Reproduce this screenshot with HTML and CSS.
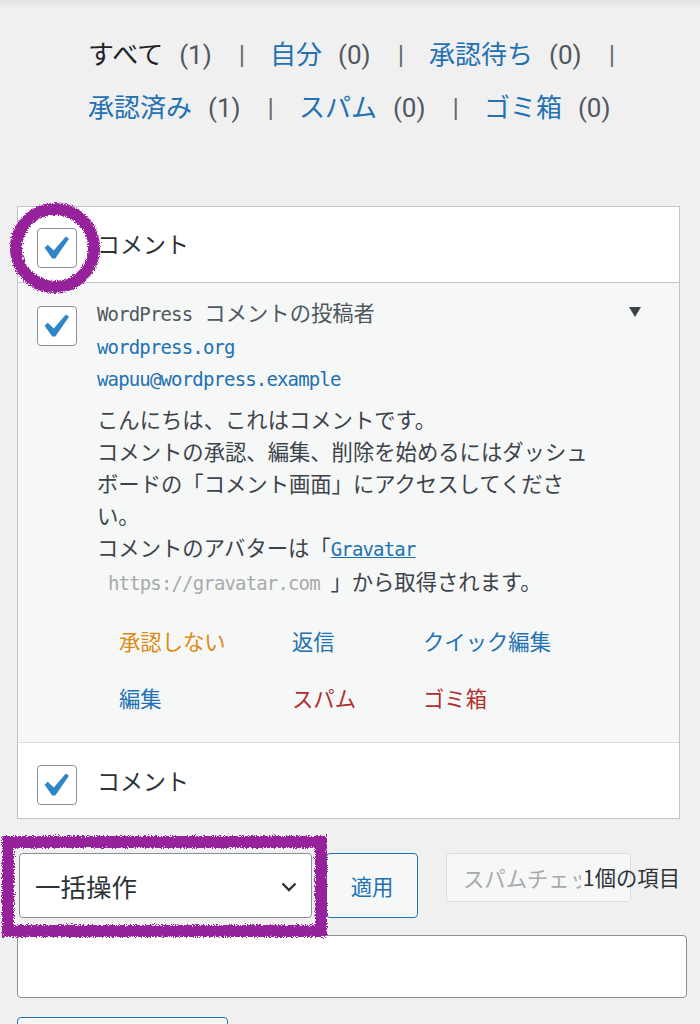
FILE: index.html
```html
<!DOCTYPE html>
<html lang="ja">
<head>
<meta charset="utf-8">
<title>コメント</title>
<link rel="stylesheet" href="styles.css">
</head>
<body>
<div class="shade"></div>
<ul class="subsubsub">
  <li><span class="current">すべて</span><span class="count">(1)</span><span class="sep">|</span></li>
  <li><a class="link">自分</a><span class="count">(0)</span><span class="sep">|</span></li>
  <li><a class="link">承認待ち</a><span class="count">(0)</span><span class="sep">|</span></li>
  <li><a class="link">承認済み</a><span class="count">(1)</span><span class="sep">|</span></li>
  <li><a class="link">スパム</a><span class="count">(0)</span><span class="sep">|</span></li>
  <li><a class="link">ゴミ箱</a><span class="count">(0)</span></li>
</ul>

<div class="table">
  <div class="row head">
    <span class="cb"><svg class="check" viewBox="0 0 20 20"><path d="M14.83 4.89l1.34.94-5.81 8.38H9.02L5.78 9.67l1.34-1.25 2.57 2.4z"/></svg></span>
    <span class="col-title">コメント</span>
  </div>
  <div class="row comment">
    <span class="cb cb-row"><svg class="check" viewBox="0 0 20 20"><path d="M14.83 4.89l1.34.94-5.81 8.38H9.02L5.78 9.67l1.34-1.25 2.57 2.4z"/></svg></span>
    <div class="body">
      <div class="author">
        <div class="mono-line"><span class="mono gray">WordPress</span><span class="jp gray">コメントの投稿者</span></div>
        <div class="mono-line"><a class="mono link">wordpress.org</a></div>
        <div class="mono-line"><a class="mono link">wapuu@wordpress.example</a></div>
      </div>
      <p class="text">こんにちは、これはコメントです。<br>コメントの承認、編集、削除を始めるにはダッシュボードの「コメント画面」にアクセスしてください。<br>コメントのアバターは「<a class="mono link under">Gravatar</a><br><span class="mono url">https://gravatar.com </span>」から取得されます。</p>
      <div class="actions">
        <a class="unapprove">承認しない</a>
        <a class="link">返信</a>
        <a class="link">クイック編集</a>
        <a class="link">編集</a>
        <a class="danger">スパム</a>
        <a class="danger">ゴミ箱</a>
      </div>
    </div>
    <span class="toggle"></span>
  </div>
  <div class="row foot">
    <span class="cb cb-foot"><svg class="check" viewBox="0 0 20 20"><path d="M14.83 4.89l1.34.94-5.81 8.38H9.02L5.78 9.67l1.34-1.25 2.57 2.4z"/></svg></span>
    <span class="col-title foot-title">コメント</span>
  </div>
</div>

<div class="tablenav">
  <div class="select">一括操作<svg class="chev" viewBox="0 0 16 10"><polyline points="1.5,1.5 8,8 14.5,1.5"/></svg></div>
  <span class="btn apply">適用</span>
  <span class="btn disabled"><span class="clip">スパムチェック</span></span>
  <span class="num">1個の項目</span>
</div>
<div class="input"></div>
<div class="bottom-btn"></div>

<svg class="marks" viewBox="0 0 700 1024" width="700" height="1024">
  <defs>
    <filter id="rough" x="-10%" y="-10%" width="120%" height="120%">
      <feTurbulence type="fractalNoise" baseFrequency="0.9" numOctaves="2" seed="4" result="n"/>
      <feDisplacementMap in="SourceGraphic" in2="n" scale="6" xChannelSelector="R" yChannelSelector="G"/>
    </filter>
  </defs>
  <circle cx="55" cy="248" r="39" fill="none" stroke="#95239a" stroke-width="12" filter="url(#rough)"/>
  <rect x="8" y="842" width="313" height="89" fill="none" stroke="#95239a" stroke-width="12" filter="url(#rough)"/>
</svg>
</body>
</html>
```

FILE: styles.css
```css
html, body {
  margin: 0;
  padding: 0;
}
body {
  background: #f0f0f1;
  width: 700px;
  height: 1024px;
  overflow: hidden;
  position: relative;
  font-family: "Noto Sans CJK JP", "Noto Sans", sans-serif;
  color: #3c434a;
}
a { text-decoration: none; }

.shade {
  height: 10px;
  background: linear-gradient(#e4e4e5, #f0f0f1);
}

.subsubsub {
  list-style: none;
  margin: 16px 0 0 0;
  padding: 0 0 0 88px;
  display: flex;
  flex-wrap: wrap;
  font-size: 26px;
  line-height: 53px;
}
.subsubsub li {
  display: flex;
  align-items: baseline;
  height: 53px;
}
.current { color: #1d2327; }
.link { color: #2271b1; }
.count {
  font-family: Roboto, "Noto Sans", sans-serif;
  color: #50575e;
  margin-left: 16px;
}
.sep {
  font-family: Roboto, "Noto Sans", sans-serif;
  color: #646970;
  margin: 0 25px 0 27px;
}

.table {
  margin: 74px 20px 0 17px;
  border: 1px solid #c3c4c7;
  background: #fff;
}
.row {
  display: flex;
  align-items: flex-start;
  padding: 0 19px;
  position: relative;
}
.head {
  height: 75px;
  border-bottom: 1px solid #c3c4c7;
}
.foot {
  height: 75px;
  border-top: 1px solid #dcdcde;
}
.comment {
  background: #f6f7f7;
}

.cb {
  box-sizing: border-box;
  width: 40px;
  height: 40px;
  border: 1.5px solid #8c8f94;
  border-radius: 4px;
  background: #fff;
  position: relative;
  flex: none;
  margin-top: 21px;
}
.cb-row { margin-top: 23px; }
.cb-foot { margin-top: 22px; }
.check {
  position: absolute;
  left: -7px;
  top: -4px;
  width: 47px;
  height: 47px;
  fill: #2f86c6;
}
.col-title {
  font-size: 23px;
  line-height: 32px;
  margin: 20px 0 0 20px;
  color: #2c3338;
}
.foot-title { margin-top: 21px; }

.body {
  margin-left: 20px;
  padding: 13px 0 28px;
  font-size: 21.33px;
}
.mono-line {
  line-height: 32.5px;
  height: 32.5px;
}
.mono {
  font-family: "DejaVu Sans Mono", "Liberation Mono", monospace;
  font-size: 19px;
  letter-spacing: -0.85px;
}
.gray { color: #50575e; }
.jp {
  font-family: "Noto Sans CJK JP", sans-serif;
  font-size: 21.33px;
  margin-left: 12px;
}
.text {
  margin: 9px 0 0 0;
  width: 500px;
  line-height: 32px;
  color: #3c434a;
}
.under { text-decoration: underline; }
.url {
  color: #a7aaad;
  margin-left: 11px;
}
.actions {
  margin: 26.5px 0 0 22px;
  display: grid;
  grid-template-columns: 173px 131px auto;
  row-gap: 25px;
  line-height: 32px;
}
.unapprove { color: #dd8a12; }
.danger { color: #b32d2e; }
.toggle {
  position: absolute;
  left: 611px;
  top: 24px;
  width: 0;
  height: 0;
  border-left: 6.5px solid transparent;
  border-right: 6.5px solid transparent;
  border-top: 10px solid #3c434a;
}

.tablenav {
  position: relative;
  display: flex;
  align-items: flex-start;
  margin-top: 34px;
  padding-left: 19px;
  height: 65px;
}
.select {
  box-sizing: border-box;
  width: 293px;
  height: 65px;
  border: 1px solid #8c8f94;
  border-radius: 4px;
  background: #fff;
  display: flex;
  align-items: center;
  justify-content: space-between;
  padding: 0 14px 0 15px;
  font-size: 25.5px;
  color: #2c3338;
}
.chev {
  width: 16px;
  height: 10px;
  fill: none;
  stroke: #2c3338;
  stroke-width: 2.4;
  margin-top: 2px;
}
.btn {
  box-sizing: border-box;
  border-radius: 4px;
  font-size: 21.33px;
  display: flex;
  align-items: center;
}
.apply {
  margin-left: 14px;
  width: 92px;
  height: 65px;
  border: 1px solid #2271b1;
  background: #f6f7f7;
  color: #2271b1;
  justify-content: center;
}
.disabled {
  margin-left: 28px;
  width: 185px;
  height: 49px;
  border: 1px solid #dcdcde;
  background: #f6f7f7;
  color: #a7aaad;
  padding-left: 16px;
}
.clip {
  display: inline-block;
  width: 118px;
  overflow: hidden;
  white-space: nowrap;
}
.num {
  position: absolute;
  right: 20px;
  top: 8px;
  font-size: 21.33px;
  line-height: 32px;
  color: #2c3338;
}
.input {
  box-sizing: border-box;
  margin: 17px 0 0 17px;
  width: 670px;
  height: 63px;
  border: 1px solid #8c8f94;
  border-radius: 4px;
  background: #fff;
}
.bottom-btn {
  box-sizing: border-box;
  margin: 19px 0 0 17px;
  width: 211px;
  height: 40px;
  border: 1px solid #2271b1;
  border-radius: 4px;
  background: #f6f7f7;
}
.marks {
  position: absolute;
  left: 0;
  top: 0;
  pointer-events: none;
}
```
